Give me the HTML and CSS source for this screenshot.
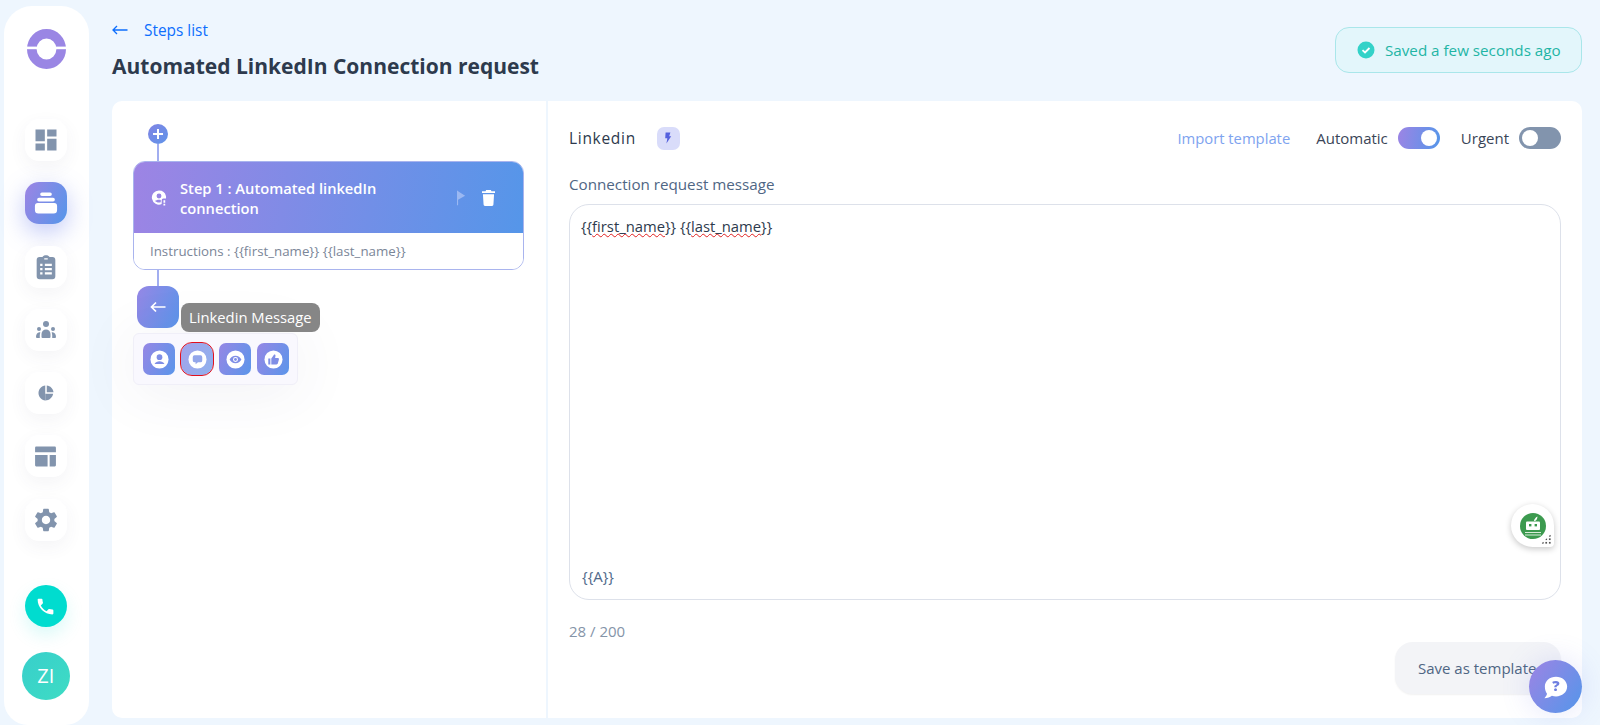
FILE: index.html
```html
<!DOCTYPE html>
<html lang="en">
<head>
  <meta charset="UTF-8">
  <meta name="viewport" content="width=device-width, initial-scale=1.0">
  <title>Automated LinkedIn Connection request</title>
  <link rel="stylesheet" href="styles.css">
</head>
<body>
  <aside class="sidebar">
    <svg class="logo" viewBox="0 0 39 40">
      <ellipse cx="19.5" cy="20" rx="14.7" ry="15.200" fill="none" stroke="#9a86e4" stroke-width="9.600"/>
      <rect x="0" y="17.6" width="39" height="2.6" fill="#fff"/>
    </svg>

    <nav class="side-nav">
      <a class="side-item icon-lg">
        <svg viewBox="0 0 24 24"><path d="M3 13h8V3H3v10zm0 8h8v-6H3v6zm10 0h8V11h-8v10zm0-18v6h8V3h-8z"/></svg>
      </a>
      <a class="side-item active icon-lg">
        <svg viewBox="0 0 24 24"><path d="M8.5 3h7a1.5 1.5 0 0 1 0 3h-7a1.5 1.5 0 0 1 0-3zM6 7.5h12a1.6 1.6 0 0 1 0 3.2H6a1.6 1.6 0 0 1 0-3.200zM5 12h14a2.500 2.500 0 0 1 2.500 2.500V18a3 3 0 0 1-3 3h-13a3 3 0 0 1-3-3v-3.500A2.500 2.500 0 0 1 5 12z"/></svg>
      </a>
      <a class="side-item icon-lg">
        <svg viewBox="0 0 24 24"><path fill-rule="evenodd" d="M9 3.500C9.500 2.500 10.500 2 12 2s2.500.5 3 1.500h2.500A2.500 2.500 0 0 1 20 6v14a2.500 2.500 0 0 1-2.500 2.500h-11A2.500 2.500 0 0 1 4 20V6a2.500 2.500 0 0 1 2.500-2.500zM10.500 4.500v1h3v-1zM7 9.200v2h2v-2zM11 9.200v2h6v-2zM7 12.800v2h2v-2zM11 12.800v2h6v-2zM7 16.400v2h2v-2zM11 16.400v2h6v-2z"/></svg>
      </a>
      <a class="side-item icon-md">
        <svg viewBox="0 0 20 17"><circle cx="10" cy="3" r="3"/><circle cx="3" cy="8" r="2"/><circle cx="17" cy="8" r="2"/><path d="M5.500 16v-3c0-2.500 2-4.400 4.500-4.400s4.500 1.900 4.500 4.400v3a1 1 0 0 1-1 1h-7a1 1 0 0 1-1-1z"/><path d="M0 16c0-2.500 1.200-4.800 3.400-4.800.4 0 .7.100 1 .2-.4.900-.6 1.800-.6 2.800V17H1a1 1 0 0 1-1-1zM20 16c0-2.500-1.200-4.800-3.400-4.800-.4 0-.7.100-1 .2.400.9.600 1.800.6 2.800V17H19a1 1 0 0 0 1-1z"/></svg>
      </a>
      <a class="side-item icon-xs">
        <svg viewBox="0 0 24 24"><path d="M11 2v20c-5.070-.5-9-4.790-9-10s3.930-9.500 9-10z"/><path d="M11 2c0 0 0 20 0 20 5.500 0 9.500-3.800 10.500-9H11z"/><path d="M13.030 2v8.990H22c-.47-4.740-4.240-8.520-8.970-8.990z"/></svg>
      </a>
      <a class="side-item">
        <svg viewBox="0 0 24 24"><path d="M3 2.500h18a1 1 0 0 1 1 1V8H2V3.500a1 1 0 0 1 1-1zM2 10.500h12v11H3a1 1 0 0 1-1-1zM16 10.500h6v10a1 1 0 0 1-1 1h-5z"/></svg>
      </a>
      <a class="side-item icon-lg">
        <svg viewBox="0 0 24 24"><path d="M19.140 12.940c.04-.3.06-.61.06-.94 0-.32-.02-.64-.07-.94l2.030-1.580c.18-.14.23-.41.12-.61l-1.920-3.320c-.12-.22-.37-.29-.59-.22l-2.390.96c-.5-.38-1.030-.7-1.620-.94l-.36-2.540c-.04-.24-.24-.41-.48-.41h-3.840c-.24 0-.43.17-.47.41l-.36 2.540c-.59.24-1.130.57-1.620.94l-2.390-.96c-.22-.08-.47 0-.59.22L2.740 8.870c-.12.21-.08.47.12.61l2.030 1.580c-.05.3-.09.63-.09.94s.02.64.07.94l-2.030 1.580c-.18.14-.23.41-.12.61l1.920 3.320c.12.22.37.29.59.22l2.390-.96c.5.38 1.030.7 1.620.94l.36 2.540c.05.24.24.41.48.41h3.840c.24 0 .44-.17.47-.41l.36-2.540c.59-.24 1.130-.56 1.620-.94l2.390.96c.22.08.47 0 .59-.22l1.920-3.320c.12-.22.07-.47-.12-.61l-2.010-1.580zM12 15.600c-1.980 0-3.600-1.620-3.600-3.600s1.620-3.600 3.600-3.600 3.600 1.620 3.600 3.600-1.620 3.600-3.600 3.600z"/></svg>
      </a>
    </nav>

    <div class="side-bottom">
      <a class="phone-btn">
        <svg viewBox="0 0 24 24"><path d="M6.620 10.790c1.440 2.830 3.760 5.140 6.590 6.590l2.200-2.200c.27-.27.67-.36 1.020-.24 1.120.37 2.330.57 3.570.57.55 0 1 .45 1 1V20c0 .55-.45 1-1 1-9.390 0-17-7.610-17-17 0-.55.45-1 1-1h3.500c.55 0 1 .45 1 1 0 1.250.2 2.450.57 3.570.11.35.03.74-.25 1.020l-2.200 2.200z"/></svg>
      </a>
      <div class="avatar">ZI</div>
    </div>
  </aside>

  <main class="main">
    <header class="page-head">
      <div>
        <a class="back-link">
          <svg viewBox="0 0 16 10"><path d="M15.500 5H1M5 1 1 5l4 4" fill="none" stroke="#0d6efd" stroke-width="1.300"/></svg>
          Steps list
        </a>
        <h1 class="page-title">Automated LinkedIn Connection request</h1>
      </div>
      <div class="saved-badge">
        <svg viewBox="0 0 18 18"><circle cx="9" cy="9" r="8.500" fill="#33d2c8"/><path d="M5.500 9.200 8 11.500l4.500-4.500" fill="none" stroke="#fff" stroke-width="1.800"/></svg>
        Saved a few seconds ago
      </div>
    </header>

    <section class="panel">
      <div class="steps">
        <div class="add-step">
          <svg viewBox="0 0 20 20"><path d="M10 5v10M5 10h10" stroke="#fff" stroke-width="2"/></svg>
        </div>
        <div class="line line-top"></div>

        <div class="step-card">
          <div class="step-head">
            <svg class="step-icon" viewBox="0 0 18 18"><path fill-rule="evenodd" d="M9 1a8 8 0 0 1 7.800 6.200c.2 1 .2 1.800 0 2.800H14a2 2 0 0 0-2 2v4.400A8 8 0 1 1 9 1zm0 3.500A2.700 2.700 0 1 0 9 10a2.700 2.700 0 0 0 0-5.500zM4.500 13c1 1 2.600 1.700 4.500 1.700.8 0 1.500-.1 2-.3v-2.700c-.6-.2-1.300-.3-2-.3-1.900 0-3.500.7-4.500 1.600z"/><path d="M14 12h2v3h-2zM14 16h2v2h-2z"/></svg>
            <div class="step-title">Step 1 : Automated linkedIn connection</div>
            <svg class="step-flag" viewBox="0 0 10 16"><path d="M0 0h1.200v16H0zM1.200.5 9 5.500 1.200 10z"/></svg>
            <svg class="step-trash" viewBox="0 0 14 17"><path d="M4.500 0h5l.7 1.200H14v2H0v-2h3.800zM1 4.500h12l-.7 11a1.500 1.500 0 0 1-1.500 1.500H3.200a1.500 1.500 0 0 1-1.500-1.500z"/></svg>
          </div>
          <div class="step-note">Instructions : {{first_name}} {{last_name}}</div>
        </div>

        <div class="line line-bottom"></div>

        <div class="picker">
          <a class="picker-back">
            <svg viewBox="0 0 16 12"><path d="M15.500 6H1.500M6 1.500 1.500 6 6 10.500" fill="none" stroke="#fff" stroke-width="1.700"/></svg>
          </a>
          <div class="tooltip">Linkedin Message</div>
          <div class="picker-tools">
            <a class="tool">
              <svg viewBox="0 0 20 20"><circle cx="10" cy="10" r="9.500" fill="#fff"/><circle cx="10" cy="7.600" r="3" fill="#7f8ee6"/><path d="M4.800 14.800c1-2 3-3 5.200-3s4.200 1 5.200 3z" fill="#7f8ee6"/></svg>
            </a>
            <a class="tool tool-hover">
              <svg viewBox="0 0 20 20"><circle cx="10" cy="10" r="9.500" fill="#fff"/><path d="M6.800 5.500h6.400A2 2 0 0 1 15 7.500v3.500a2 2 0 0 1-2 2h-2.500L8 15v-2H6.800A2 2 0 0 1 5 11V7.500a2 2 0 0 1 1.800-2z" fill="#93a6ea"/></svg>
            </a>
            <a class="tool">
              <svg viewBox="0 0 20 20"><circle cx="10" cy="10" r="9.500" fill="#fff"/><path d="M3.800 10C5 7.600 7.300 6 10 6s5 1.600 6.200 4c-1.200 2.400-3.500 4-6.200 4s-5-1.600-6.200-4z" fill="#7f8ee6"/><circle cx="10" cy="10" r="2.600" fill="#fff"/><circle cx="10" cy="10" r="1.500" fill="#7f8ee6"/></svg>
            </a>
            <a class="tool">
              <svg viewBox="0 0 20 20"><circle cx="10" cy="10" r="9.500" fill="#fff"/><path d="M4.500 9h2.200v6.200H4.500zM7.700 15.200V9l3-4.300c.8-.2 1.500.3 1.400 1.300L11.700 8.500h2.900c.8 0 1.300.7 1.100 1.500l-1.100 4c-.2.700-.7 1.200-1.400 1.200z" fill="#7f8ee6"/></svg>
            </a>
          </div>
        </div>
      </div>

      <div class="editor">
        <div class="editor-bar">
          <span class="channel">Linkedin</span>
          <span class="bolt-chip">
            <svg viewBox="0 0 10 14"><path d="M2 0h6L6.500 4.800H9L3 14l1.200-6.800H1.500z"/></svg>
          </span>
          <a class="import-link">Import template</a>
          <span class="switch-label">Automatic</span>
          <span class="switch on"><i></i></span>
          <span class="switch-label urgent-label">Urgent</span>
          <span class="switch"><i></i></span>
        </div>

        <label class="field-label">Connection request message</label>
        <div class="message-box">
          <div class="message-text">{{<u>first_name</u>}} {{<u>last_name</u>}}</div>
          <div class="message-foot">{{A}}</div>
          <div class="grammar-btn">
            <svg viewBox="0 0 26 26">
              <circle cx="13" cy="13" r="13" fill="#3c9a4f"/>
              <path d="M14 8c.3-2 1.500-3.500 3.500-4.500-.2 2-.8 3.500-2.500 4.500z" fill="#fff"/>
              <rect x="6" y="8.500" width="14" height="8.500" rx="1" fill="#fff"/>
              <rect x="9" y="11" width="2.400" height="2.400" fill="#3c9a4f"/>
              <rect x="14.600" y="11" width="2.400" height="2.400" fill="#3c9a4f"/>
              <path d="M5 19h16v1H5zM5 21.500h16v1H5z" fill="#d8ecd9"/>
            </svg>
            <span class="grip"></span>
          </div>
        </div>
        <div class="counter">28 / 200</div>
        <div class="editor-actions">
          <button type="button" class="save-btn">Save as template</button>
        </div>
      </div>
    </section>
  </main>

  <a class="help-btn">
    <svg viewBox="0 0 30 28">
      <path d="M15 2c7.200 0 13 4.800 13 11.500S22.200 25 15 25c-1.700 0-3.300-.2-4.800-.7C8 26 5 27 1.500 27c1.600-1.400 2.600-3 3-5C3 19.800 2 17 2 13.500 2 6.800 7.800 2 15 2z" fill="#fff"/>
      <text x="15" y="19" text-anchor="middle" class="help-mark">?</text>
    </svg>
  </a>
</body>
</html>
```

FILE: styles.css
```css
html, body {
  height: 100%;
  overflow: hidden;
}
body {
  display: flex;
  margin: 0;
  font-family: "Open Sans", Arial, sans-serif;
  font-size: 15px;
  background-color: #eef6fe;
  color: #2d3a4d;
}
a {
  text-decoration: none;
}

/* sidebar */
.sidebar {
  display: flex;
  flex-direction: column;
  align-items: center;
  flex: 0 0 85px;
  margin: 6px 0 0 4px;
  padding: 23px 1.5px 0 0;
  box-sizing: border-box;
  background-color: #fff;
  border-radius: 28px 28px 24px 24px;
}
.logo {
  width: 39px;
  height: 40px;
  margin-left: 1.5px;
}
.side-nav {
  display: flex;
  flex-direction: column;
  gap: 21.3px;
  margin-top: 50px;
}
.side-item {
  display: flex;
  justify-content: center;
  align-items: center;
  width: 42px;
  height: 42px;
  border-radius: 14px;
  background-color: #fff;
  box-shadow: 0 6px 18px rgba(60, 70, 100, 0.06);
}
.side-item svg {
  width: 25px;
  height: 25px;
  fill: #8294ad;
}
.side-item.icon-lg svg {
  width: 28px;
  height: 28px;
}
.side-item.icon-md svg {
  width: 20px;
  height: 17px;
}
.side-item.icon-xs svg {
  width: 18px;
  height: 18px;
}
.side-item.active {
  background: linear-gradient(115deg, #9d84e4, #5496ea);
  box-shadow: 0 8px 24px rgba(100, 120, 235, 0.4);
}
.side-item.active svg {
  fill: #fff;
}
.side-bottom {
  display: flex;
  flex-direction: column;
  align-items: center;
  gap: 25px;
  margin-top: auto;
  padding-bottom: 25px;
}
.phone-btn {
  display: flex;
  justify-content: center;
  align-items: center;
  width: 42px;
  height: 42px;
  border-radius: 50%;
  background-color: #00dccf;
  box-shadow: 0 8px 18px rgba(0, 220, 207, 0.15);
}
.phone-btn svg {
  width: 21px;
  height: 21px;
  fill: #fff;
}
.avatar {
  width: 48px;
  height: 48px;
  border-radius: 50%;
  background: linear-gradient(135deg, #38cfcb, #3edcc4);
  color: #fff;
  font-size: 20px;
  line-height: 48px;
  text-align: center;
}

/* page */
.main {
  display: flex;
  flex-direction: column;
  flex: 1;
  min-width: 0;
  padding: 0 18px 7px 23px;
}
.page-head {
  display: flex;
  justify-content: space-between;
  align-items: flex-start;
  height: 101px;
  box-sizing: border-box;
  padding-top: 20px;
}
.back-link {
  display: flex;
  align-items: center;
  gap: 16px;
  height: 20px;
  color: #0d6efd;
  font-size: 15.400px;
}
.back-link svg {
  width: 16px;
  height: 10px;
}
.page-title {
  margin: 11px 0 0;
  font-size: 21px;
  line-height: 30px;
  font-weight: 700;
  color: #2d3a4d;
}
.saved-badge {
  display: flex;
  align-items: center;
  gap: 10px;
  width: 247px;
  height: 46px;
  margin-top: 7px;
  padding-left: 21px;
  box-sizing: border-box;
  background-color: #e3f6fb;
  border: 1px solid #a9e6ea;
  border-radius: 14px;
  color: #1fb5a5;
  font-size: 15.200px;
  font-weight: 500;
}
.saved-badge svg {
  width: 18px;
  height: 18px;
}

.panel {
  display: flex;
  flex: 1;
  min-height: 0;
  gap: 2px;
}

/* left column */
.steps {
  flex: 0 0 434px;
  box-sizing: border-box;
  padding: 23px 22px 0 21px;
  background-color: #fff;
  border-radius: 10px 0 0 10px;
}
.add-step {
  width: 20px;
  height: 20px;
  margin-left: 15px;
  border-radius: 50%;
  background: linear-gradient(135deg, #8184e4, #5f94e9);
}
.add-step svg {
  display: block;
}
.line {
  width: 2px;
  margin-left: 24px;
  background-color: #a2aef0;
}
.line-top {
  height: 17px;
}
.line-bottom {
  height: 16px;
}
.step-card {
  border: 1px solid #a9b4ee;
  border-radius: 12px;
  overflow: hidden;
}
.step-head {
  display: flex;
  align-items: center;
  height: 71px;
  padding: 0 28px 0 17px;
  background: linear-gradient(100deg, #9d84e4, #5596e9);
  color: #fff;
}
.step-icon {
  flex: none;
  width: 16px;
  height: 17px;
  margin-right: 13px;
  fill: #fff;
}
.step-title {
  flex: 1;
  max-width: 235px;
  font-size: 14.700px;
  line-height: 20px;
  font-weight: 600;
}
.step-flag {
  flex: none;
  width: 9px;
  height: 16px;
  margin-left: auto;
  fill: #9bb8f2;
}
.step-trash {
  flex: none;
  width: 13px;
  height: 16px;
  margin-left: 16px;
  fill: #fff;
}
.step-note {
  height: 36px;
  padding-left: 16px;
  background-color: #fff;
  color: #7b8698;
  font-size: 13.300px;
  line-height: 37px;
}
.picker {
  position: relative;
}
.picker-back {
  display: flex;
  justify-content: center;
  align-items: center;
  width: 42px;
  height: 42px;
  margin-left: 4px;
  border-radius: 12px;
  background: linear-gradient(115deg, #9687e5, #5a95ea);
}
.picker-back svg {
  width: 16px;
  height: 12px;
}
.tooltip {
  position: absolute;
  left: 48px;
  top: 17px;
  z-index: 2;
  padding: 0 8px;
  height: 29px;
  border-radius: 8px;
  background-color: #868686;
  color: #fff;
  font-size: 14.800px;
  line-height: 29px;
}
.picker-tools {
  display: flex;
  gap: 6px;
  width: 165px;
  margin-top: 5px;
  padding: 9px 9px;
  box-sizing: border-box;
  background-color: #f9f8fe;
  border: 1px solid #f0eff8;
  border-radius: 6px;
  box-shadow: 0 6px 60px rgba(70, 70, 110, 0.08);
}
.tool {
  display: flex;
  flex: none;
  justify-content: center;
  align-items: center;
  width: 32px;
  height: 32px;
  border-radius: 7px;
  background: linear-gradient(115deg, #9687e5, #5a95ea);
}
.tool svg {
  width: 19px;
  height: 19px;
}
.tool-hover {
  background: linear-gradient(115deg, #a3a3ea, #8fb1ee);
  outline: 1.200px solid #e0101e;
  outline-offset: 0;
  border-radius: 11px;
}

/* right column */
.editor {
  flex: 1;
  min-width: 0;
  box-sizing: border-box;
  padding: 26px 21px 0 21px;
  background-color: #fff;
  border-radius: 0 10px 10px 0;
}
.editor-bar {
  display: flex;
  align-items: center;
  height: 22px;
}
.channel {
  font-size: 15.500px;
  font-weight: 500;
  letter-spacing: 0.7px;
}
.bolt-chip {
  display: flex;
  justify-content: center;
  align-items: center;
  width: 23px;
  height: 23px;
  margin-left: 21px;
  border-radius: 7px;
  background-color: #d9dcfa;
}
.bolt-chip svg {
  width: 8px;
  height: 12px;
  fill: #5561de;
}
.import-link {
  margin-left: auto;
  color: #7ea3ef;
  font-size: 14.800px;
}
.switch-label {
  margin-left: 26px;
  font-size: 15px;
  color: #3a4557;
}
.urgent-label {
  margin-left: 21px;
}
.switch {
  position: relative;
  flex: none;
  width: 42px;
  height: 22px;
  margin-left: 10px;
  border-radius: 11px;
  background-color: #8294ad;
}
.switch i {
  position: absolute;
  top: 3px;
  left: 3px;
  width: 16px;
  height: 16px;
  border-radius: 50%;
  background-color: #fff;
}
.switch.on {
  background: linear-gradient(100deg, #9d84e4, #5496ea);
}
.switch.on i {
  left: 23px;
}
.field-label {
  display: block;
  margin-top: 25px;
  color: #4f6684;
  font-size: 15.200px;
  font-weight: 500;
  line-height: 20px;
}
.message-box {
  position: relative;
  display: flex;
  flex-direction: column;
  justify-content: space-between;
  height: 396px;
  margin-top: 10px;
  padding: 11px 13px 13px 11px;
  box-sizing: border-box;
  border: 1px solid #dde1ea;
  border-radius: 20px;
}
.message-text {
  font-size: 14.800px;
  line-height: 20px;
}
.message-text u {
  text-decoration: underline wavy #e02020 1px;
  text-underline-offset: 1px;
}
.message-foot {
  padding-left: 1px;
  color: #50698a;
  font-size: 15px;
  line-height: 20px;
}
.grammar-btn {
  position: absolute;
  right: 6px;
  bottom: 52px;
  display: flex;
  justify-content: center;
  align-items: center;
  width: 43px;
  height: 43px;
  border-radius: 50% 50% 4px 50%;
  background-color: #fff;
  box-shadow: 0 2px 6px rgba(0, 0, 0, 0.22);
}
.grammar-btn svg {
  width: 26px;
  height: 26px;
}
.grip {
  position: absolute;
  right: 3px;
  bottom: 3px;
  width: 10px;
  height: 10px;
  background-image: radial-gradient(circle, #555 0.8px, transparent 1px);
  background-size: 3.500px 3.500px;
  clip-path: polygon(100% 0, 100% 100%, 0 100%);
}
.counter {
  margin-top: 21px;
  color: #8494a8;
  font-size: 15px;
  line-height: 20px;
}
.editor-actions {
  display: flex;
  justify-content: flex-end;
  margin-top: 1px;
}
.save-btn {
  width: 166px;
  height: 52px;
  padding: 0 0 0 23px;
  border: none;
  border-radius: 18px;
  background-color: #f3f4f7;
  box-shadow: 0 1px 2px rgba(0, 0, 0, 0.06);
  color: #4f6684;
  font-family: inherit;
  font-size: 15px;
  font-weight: 500;
  text-align: left;
  white-space: nowrap;
}
.help-btn {
  position: fixed;
  right: 18px;
  bottom: 12px;
  display: flex;
  justify-content: center;
  align-items: center;
  width: 53px;
  height: 53px;
  border-radius: 50%;
  background: linear-gradient(125deg, #9d84e4, #5496ea);
  box-shadow: 0 0 30px rgba(100, 110, 235, 0.18);
}
.help-btn svg {
  width: 26px;
  height: 24px;
}
.help-mark {
  font-family: "Open Sans", Arial, sans-serif;
  font-size: 17px;
  font-weight: 800;
  fill: #6f7fe0;
}
```
